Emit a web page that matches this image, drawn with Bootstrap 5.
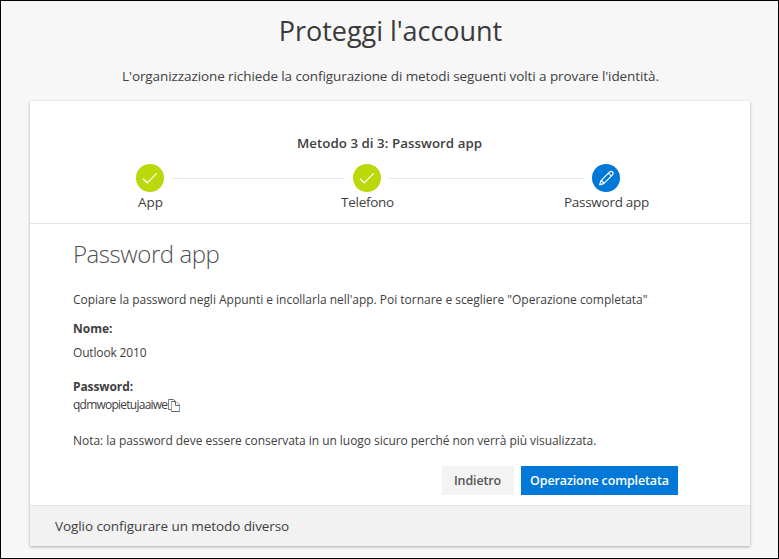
<!DOCTYPE html>
<html lang="it">
<head>
<meta charset="utf-8">
<meta name="viewport" content="width=device-width, initial-scale=1">
<title>Proteggi l'account</title>
<link href="https://cdn.jsdelivr.net/npm/bootstrap@5.3.0/dist/css/bootstrap.min.css" rel="stylesheet">
<style>
body{font-family:"Open Sans","Noto Sans",sans-serif;font-size:13px;line-height:20px;color:#404040;background:#f7f7f7}
.page{width:779px;height:559px;border:1px solid #000;padding-top:10px}
.page-title{font-size:27px;line-height:40px;font-weight:400;color:#3a3a3a;letter-spacing:-.04px;padding-left:2px}
.page-sub{font-size:13.5px;margin-top:15px;letter-spacing:-.09px;padding-left:2px}
.panel{width:720px;height:445px;margin:15px 0 0 29px;box-shadow:0 1px 3px rgba(0,0,0,.3)}
.steps-head{height:123px;padding-top:32px;border-bottom:1px solid #e5e5e5}
.steps-title{font-size:13.3px;font-weight:600;letter-spacing:.05px;padding-right:1px}
.steps{margin-top:11px;padding:0 77px}
.step{width:86px}
.step-dot{width:28px;height:28px;background:#bad80a}
.step-dot.current{background:#0078d7}
.step-label{font-size:13.5px;white-space:nowrap;letter-spacing:-.27px;padding-left:1px}
.step-label.short{letter-spacing:0}
.step-line{height:1px;background:#e6e6e6;margin:14px -21px 0}
.step-line.first{width:173px}
.step-line.second{width:195px}
.panel-main{height:281px;padding:13px 0 0 43px}
.panel-title{font-size:24px;line-height:34px;font-weight:300;color:#505050;letter-spacing:-.44px}
.copy{font-size:12px}
.intro{margin-top:19px;letter-spacing:-.02px}
.name-label{margin-top:9px}
.name-value{margin-top:4px;letter-spacing:-.16px}
.pwd-label{margin-top:14px;letter-spacing:-.1px}
.pwd{margin-top:-2px;letter-spacing:-.76px}
.note{margin-top:16px;letter-spacing:-.045px}
.actions{margin-top:15px;gap:7px;padding-right:72px}
.btn-step{height:29px;border-radius:0;border:0;padding:0;font-size:12.5px;font-weight:600;line-height:29px;letter-spacing:-.13px}
.btn-back{width:72px;background:#f3f3f3;color:#555;padding-right:1px}
.btn-done{width:157px;background:#0078d7;color:#fff}
.panel-foot{height:41px;background:#f2f2f2;border-top:1px solid #e5e5e5;padding-left:25px;font-size:13.5px;letter-spacing:-.08px}
</style>
</head>
<body>
<main class="page overflow-hidden">
  <h1 class="page-title text-center mb-0">Proteggi l'account</h1>
  <p class="page-sub text-center mb-0">L'organizzazione richiede la configurazione di metodi seguenti volti a provare l'identità.</p>
  <section class="panel bg-white">
    <header class="steps-head">
      <div class="steps-title text-center">Metodo 3 di 3: Password app</div>
      <div class="steps d-flex align-items-start">
        <div class="step d-flex flex-column align-items-center flex-shrink-0">
          <div class="step-dot rounded-circle"><svg class="d-block" width="28" height="28" fill="none" stroke="#fff" stroke-width="1.2"><path d="M7 14.700l4.200 4.100L20.700 9.300"/></svg></div>
          <span class="step-label short">App</span>
        </div>
        <div class="step-line first flex-shrink-0"></div>
        <div class="step d-flex flex-column align-items-center flex-shrink-0">
          <div class="step-dot rounded-circle"><svg class="d-block" width="28" height="28" fill="none" stroke="#fff" stroke-width="1.2"><path d="M7 14.700l4.200 4.100L20.700 9.300"/></svg></div>
          <span class="step-label">Telefono</span>
        </div>
        <div class="step-line second flex-shrink-0"></div>
        <div class="step d-flex flex-column align-items-center flex-shrink-0">
          <div class="step-dot current rounded-circle"><svg class="d-block" width="28" height="28" fill="none" stroke="#fff" stroke-width="1.2" stroke-linejoin="round"><path d="M7.700 20.800L8.800 16.800L17.400 8.200C18.500 7.100 19.700 7.200 20.500 8C21.300 8.800 21.300 10 20.300 11.100L11.700 19.700ZM8.800 16.800C10.300 17 11.400 18.100 11.700 19.700M16.200 9.400C17.500 9.700 18.700 10.900 19.100 12.300"/></svg></div>
          <span class="step-label">Password app</span>
        </div>
      </div>
    </header>
    <div class="panel-main">
      <h2 class="panel-title mb-0">Password app</h2>
      <p class="copy intro mb-0">Copiare la password negli Appunti e incollarla nell'app. Poi tornare e scegliere "Operazione completata"</p>
      <div class="copy name-label fw-bold">Nome:</div>
      <div class="copy name-value">Outlook 2010</div>
      <div class="copy pwd-label fw-bold">Password:</div>
      <div class="copy pwd d-flex align-items-center"><span>qdmwopietujaaiwe</span><svg width="14" height="14" fill="#fff" stroke="#666" stroke-width="1"><path d="M4.500 11.500H1.500V1.500H6.500L8 3"/><path d="M4.500 3.500H9L12.500 7V13.500H4.500Z"/><path d="M8.500 3.500V7.500H12.500"/><path d="M4.500 4V13" stroke="#d39b50"/><path d="M12.500 8V13" stroke="#55a8dd"/><path d="M1.500 2V11" stroke="#5b8fb5"/></svg></div>
      <p class="copy note mb-0">Nota: la password deve essere conservata in un luogo sicuro perché non verrà più visualizzata.</p>
      <div class="actions d-flex justify-content-end">
        <button type="button" class="btn btn-step btn-back">Indietro</button>
        <button type="button" class="btn btn-step btn-done">Operazione completata</button>
      </div>
    </div>
    <footer class="panel-foot d-flex align-items-center">Voglio configurare un metodo diverso</footer>
  </section>
</main>
<script src="https://cdn.jsdelivr.net/npm/bootstrap@5.3.0/dist/js/bootstrap.bundle.min.js"></script>
</body>
</html>
